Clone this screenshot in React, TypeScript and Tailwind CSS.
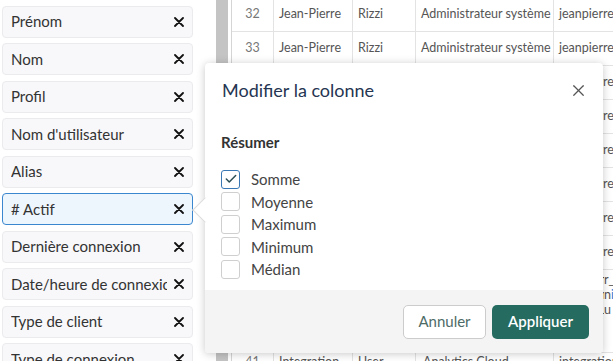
import { X, Check } from "lucide-react";

const fields = [
  "Identifiant",
  "Prénom",
  "Nom",
  "Profil",
  "Nom d'utilisateur",
  "Alias",
  "# Actif",
  "Dernière connexion",
  "Date/heure de connexion",
  "Type de client",
  "Type de connexion",
];

const rows = [32, 33, 34, 35, 36, 37, 38, 39];
const options = ["Somme", "Moyenne", "Maximum", "Minimum", "Médian"];

function SmallX() {
  return (
    <svg width="10" height="10" viewBox="0 0 10 10" className="shrink-0">
      <path d="M1 1L9 9M9 1L1 9" stroke="#111" strokeWidth="1.8" strokeLinecap="round" />
    </svg>
  );
}

function FieldList() {
  return (
    <div className="w-[216px] shrink-0 flex flex-col gap-[5.5px] -mt-[32px] pl-[2px]">
      {fields.map((f) => {
        const active = f === "# Actif";
        return (
          <div
            key={f}
            className={`w-[191px] h-[32px] shrink-0 flex items-center pl-[8px] pr-[8px] rounded-[4px] border ${
              active ? "bg-[#eef6fd] border-[#3a86cf]" : "bg-[#f8f8fa] border-[#ebebee]"
            }`}
          >
            <span className="flex-1 overflow-hidden whitespace-nowrap text-[15px] text-[#333]">{f}</span>
            <span className="ml-[7px]">
              <SmallX />
            </span>
          </div>
        );
      })}
    </div>
  );
}

function Cell({ w, children, center }: { w: string; children?: React.ReactNode; center?: boolean }) {
  return (
    <div
      className={`${w} shrink-0 border-r border-[#e3e3e3] overflow-hidden whitespace-nowrap px-[5px] pt-[7px] ${
        center ? "text-center text-[#777]" : ""
      }`}
    >
      {children}
    </div>
  );
}

// hidden start of a long value, the rest sticks out past the dialog
function Tail({ hidden, shown, blue }: { hidden: string; shown: string; blue?: string }) {
  return (
    <div className="whitespace-nowrap">
      <span className="inline-block w-[45px] overflow-hidden align-bottom">{hidden}</span>
      {shown}
      {blue && <span className="text-[#2b7bd1]">{blue}</span>}
    </div>
  );
}

function Table() {
  return (
    <div className="flex-1 pl-[3px] overflow-hidden">
      <div className="border-l border-[#d5d5d5] -mt-[2px] text-[12.5px] leading-[18px] text-[#555]">
        {rows.map((n) => (
          <div key={n} className="flex h-[34px] border-b border-[#e3e3e3]">
            <Cell w="w-[42px]" center>{n}</Cell>
            <Cell w="w-[79px]">Jean-Pierre</Cell>
            <Cell w="w-[63px]">Rizzi</Cell>
            <Cell w="w-[138px]">Administrateur système</Cell>
            <Cell w="w-[120px]">jeanpierre.rizzi</Cell>
          </div>
        ))}
        <div className="flex h-[83px] border-b border-[#e3e3e3]">
          <Cell w="w-[42px]" center>40</Cell>
          <Cell w="w-[79px]">Service</Cell>
          <Cell w="w-[63px]">Admin</Cell>
          <Cell w="w-[138px]">Compte technique</Cell>
          <div className="w-[120px] shrink-0 px-[5px] pt-[2px] leading-[15px]">
            <Tail hidden="svc_monito" shown="r_" />
            <Tail hidden="svc_admi" shown="n" blue="i" />
            <Tail hidden="svc_grou" shown="u" />
          </div>
        </div>
        <div className="flex h-[34px]">
          <div className="w-[42px] shrink-0 border-r border-[#e3e3e3] text-center text-[#777]">41</div>
          <div className="w-[79px] shrink-0 border-r border-[#e3e3e3] px-[5px]">Integration</div>
          <div className="w-[63px] shrink-0 border-r border-[#e3e3e3] px-[5px]">User</div>
          <div className="w-[138px] shrink-0 border-r border-[#e3e3e3] px-[7px]">Analytics Cloud</div>
          <div className="w-[120px] shrink-0 px-[5px]">integrationuser</div>
        </div>
      </div>
    </div>
  );
}

function Dialog() {
  return (
    <div className="absolute left-[205px] top-[63px] w-[398px] h-[290px] bg-white rounded-[4px] shadow-[0_1px_8px_rgba(0,0,0,0.22)] flex flex-col">
      <div className="absolute -left-[9px] top-[138px] w-[18px] h-[18px] rotate-45 bg-white border-l border-b border-[#dcdcdc]" />
      <div className="relative flex items-center justify-between pl-[17px] pr-[17px] h-[55px]">
        <span className="text-[18px] text-[#253552]">Modifier la colonne</span>
        <X size={19} strokeWidth={1.5} className="text-[#555] -mr-[2px]" />
      </div>
      <div className="relative flex-1 pl-[16px]">
        <div className="mt-[13px] text-[15px] font-bold text-[#333]">Résumer</div>
        <div className="mt-[16px] flex flex-col gap-[3px]">
          {options.map((o, i) => (
            <label key={o} className="flex items-center h-[19.5px]">
              <span
                className={`w-[19px] h-[19px] rounded-[3px] border flex items-center justify-center ${
                  i === 0 ? "border-[#3a78b5]" : "border-[#cfcfcf]"
                }`}
              >
                {i === 0 && <Check size={14} strokeWidth={2.6} className="text-[#2c4f56]" />}
              </span>
              <span className="ml-[11px] text-[15px] text-[#444]">{o}</span>
            </label>
          ))}
        </div>
      </div>
      <div className="h-[63px] bg-[#f4f4f4] rounded-b-[4px] flex items-center justify-end gap-[6px] pr-[14px]">
        <button className="w-[83px] h-[34px] rounded-[5px] border border-[#cccccc] bg-white text-[15px] text-[#4d6b67]">
          Annuler
        </button>
        <button className="w-[97px] h-[34px] rounded-[5px] bg-[#256b5f] text-[15px] font-semibold text-white">
          Appliquer
        </button>
      </div>
    </div>
  );
}

export default function App() {
  return (
    <div className="relative w-[613px] h-[361px] overflow-hidden bg-white flex font-['Lato','Liberation_Sans',sans-serif]">
      <FieldList />
      <div className="w-[12px] shrink-0 bg-[#c4c4c4]" />
      <Table />
      <Dialog />
    </div>
  );
}
